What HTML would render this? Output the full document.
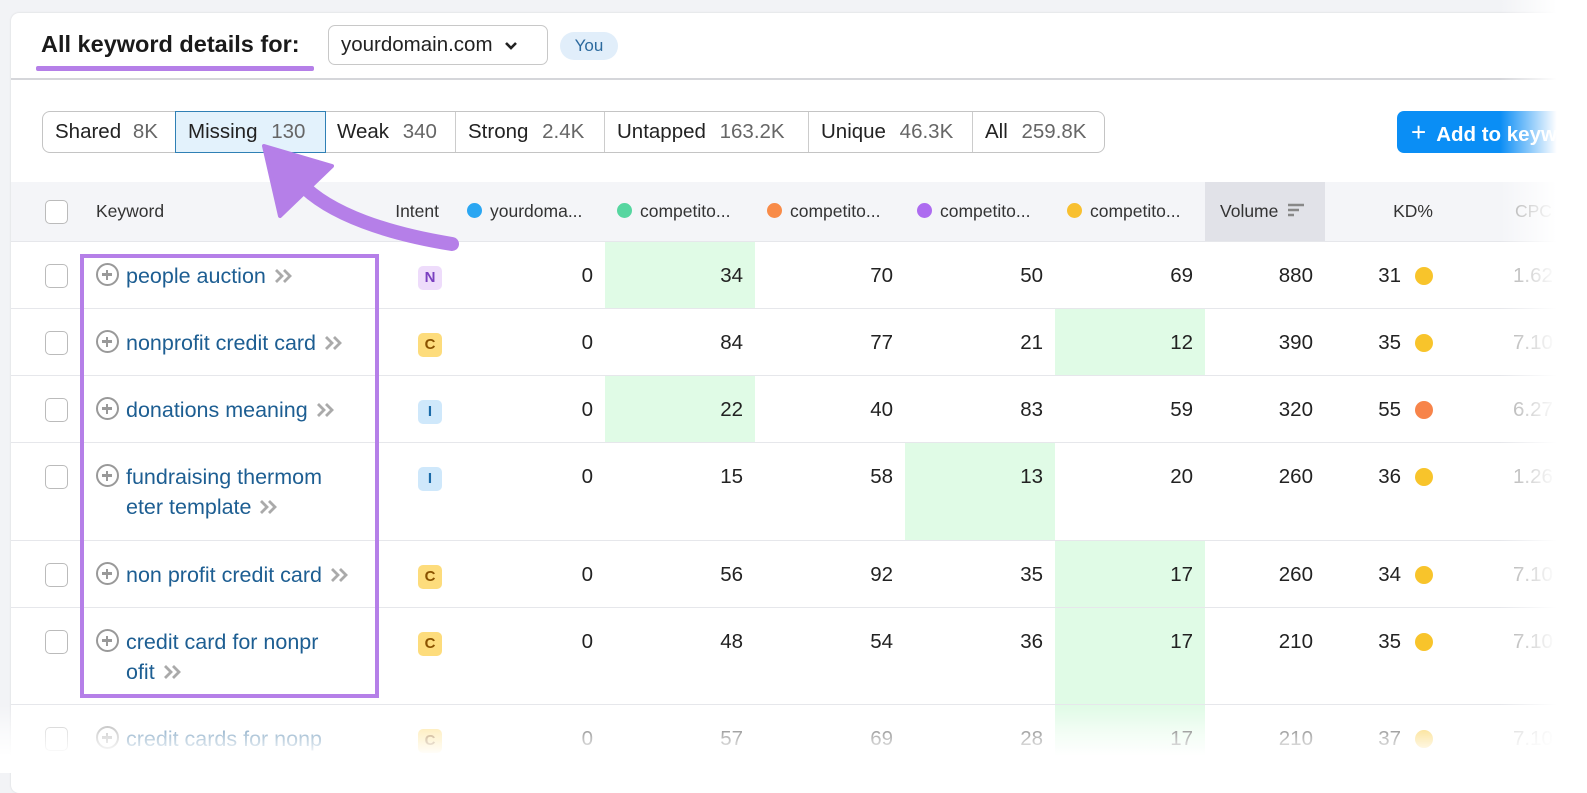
<!DOCTYPE html>
<html><head><meta charset="utf-8"><style>
*{margin:0;padding:0;box-sizing:border-box}
body{width:1587px;height:773px;overflow:hidden;background:#f2f3f6;font-family:"Liberation Sans",sans-serif;position:relative}
.card{position:absolute;left:11px;top:13px;width:1600px;height:780px;background:#fff;border-radius:8px;box-shadow:0 0 2px rgba(0,0,0,.12)}
.a{position:absolute}
table{position:absolute;left:11px;top:182px;border-collapse:collapse;table-layout:fixed;width:1600px;font-size:20.5px;color:#222}
td{vertical-align:top;padding-top:19px;line-height:30px;border-top:1px solid #e6e7eb;white-space:nowrap;overflow:hidden}
tr.h td{background:#f4f5f8;height:59px;padding-top:0;line-height:59px;font-size:17.5px;color:#333;border-top:none}
.n{text-align:right;padding-right:12px}
.g{background:#e0fbe6}
.cb{width:23px;height:24px;border:1.5px solid #bbb;border-radius:5px;margin:3px 0 0 34px;background:#fff}
.kw{color:#1d5e92;padding-left:16px;white-space:normal;line-height:30px;font-size:21.5px}
.kw span.p{display:inline-block;width:23px;height:23px;border:2.5px solid #999;border-radius:50%;vertical-align:-3px;margin-right:7px;position:relative}
.kw span.p:before{content:"";position:absolute;left:4px;top:8.3px;width:10px;height:2.5px;background:#999}
.kw span.p:after{content:"";position:absolute;left:7.8px;top:4.5px;width:2.5px;height:10px;background:#999}
.ch{display:inline-block;margin-left:8px;vertical-align:-1px}
.ib{display:inline-block;width:24px;height:24px;border-radius:5px;font-size:15px;font-weight:bold;text-align:center;line-height:24px;margin-left:38px}
.N{background:#eedcfb;color:#7a3fc0}.C{background:#fddc7c;color:#8a5200}.I{background:#cfe8fb;color:#1a6aa8}
.kd{display:flex;justify-content:flex-end;align-items:center;padding-right:12px}
.dot{display:inline-block;width:18px;height:18px;border-radius:50%;background:#f8c42b;margin-left:14px}
.cpc{color:#aaa;padding-left:68px}
.hd{display:inline-block;width:15px;height:15px;border-radius:50%;vertical-align:-1px;margin-right:8px}
</style></head><body>
<div class="card"></div>
<div class="a" style="left:41px;top:31px;font-size:23.5px;font-weight:bold;color:#1a1a1a">All keyword details for:</div>
<div class="a" style="left:36px;top:66px;width:278px;height:5px;background:#b57fe8;border-radius:2px"></div>
<div class="a" style="left:328px;top:25px;width:220px;height:40px;border:1px solid #c8c8c8;border-radius:7px;font-size:20.5px;line-height:38px;padding-left:12px;color:#222">yourdomain.com <svg width="14" height="10" style="margin-left:6px" viewBox="0 0 14 10"><path d="M2 2l5 5 5-5" stroke="#222" stroke-width="2.6" fill="none"/></svg></div>
<div class="a" style="left:560px;top:32px;width:58px;height:28px;border-radius:14px;background:#e1eefa;color:#2c6a9e;font-size:17px;line-height:28px;text-align:center">You</div>
<div class="a" style="left:11px;top:78px;width:1600px;height:2px;background:#d5d6da"></div>
<div class="a" style="left:42px;top:111px;height:42px;display:flex;border:1px solid #c4c4c4;border-radius:8px;font-size:20.5px;line-height:40px;color:#222">
<div style="width:133px;padding-left:12px">Shared <span style="color:#666;margin-left:6px">8K</span></div>
<div style="width:149px;padding-left:12px;background:#e3f2fc;outline:1.5px solid #2f80b5">Missing <span style="color:#666;margin-left:8px">130</span></div>
<div style="width:131px;padding-left:12px;border-right:1px solid #ccc">Weak <span style="color:#666;margin-left:8px">340</span></div>
<div style="width:149px;padding-left:12px;border-right:1px solid #ccc">Strong <span style="color:#666;margin-left:8px">2.4K</span></div>
<div style="width:204px;padding-left:12px;border-right:1px solid #ccc">Untapped <span style="color:#666;margin-left:8px">163.2K</span></div>
<div style="width:164px;padding-left:12px;border-right:1px solid #ccc">Unique <span style="color:#666;margin-left:8px">46.3K</span></div>
<div style="width:131px;padding-left:12px">All <span style="color:#666;margin-left:8px">259.8K</span></div>
</div>
<div class="a" style="left:1397px;top:111px;width:200px;height:42px;border-radius:7px;background:#0a8ef5;color:#fff;font-size:20.5px;font-weight:bold;line-height:42px;padding-left:14px"><span style="font-size:26px;font-weight:normal;margin-right:10px">+</span>Add to keyword</div>
<table>
<colgroup><col style="width:69px"><col style="width:300px"><col style="width:75px"><col style="width:150px"><col style="width:150px"><col style="width:150px"><col style="width:150px"><col style="width:150px"><col style="width:120px"><col style="width:120px"><col style="width:166px"></colgroup>
<tr class="h"><td><div class="cb" style="margin-top:0;vertical-align:middle;display:inline-block"></div></td><td style="padding-left:16px">Keyword</td><td style="text-align:right;padding-right:16px">Intent</td><td style="padding-left:12px"><span class="hd" style="background:#2aa6f2"></span>yourdoma...</td><td style="padding-left:12px"><span class="hd" style="background:#56d6a0"></span>competito...</td><td style="padding-left:12px"><span class="hd" style="background:#f88b48"></span>competito...</td><td style="padding-left:12px"><span class="hd" style="background:#ad6bf0"></span>competito...</td><td style="padding-left:12px"><span class="hd" style="background:#f8c030"></span>competito...</td><td style="background:#e1e2e8;padding-left:15px">Volume <svg width="18" height="14" viewBox="0 0 18 14" style="margin-left:4px"><path d="M1 2h16M1 7h11M1 12h6" stroke="#888" stroke-width="2.4"/></svg></td><td style="text-align:right;padding-right:12px">KD%</td><td class="cpc" style="padding-left:70px;color:#aaa">CPC</td></tr>
<tr style="height:67px"><td><div class="cb"></div></td><td class="kw"><span class="p"></span>people auction<svg class="ch" width="20" height="16" viewBox="0 0 20 16"><path d="M2 2l6 6-6 6M10 2l6 6-6 6" stroke="#aaa" stroke-width="2.8" fill="none"/></svg></td><td><span class="ib N">N</span></td><td class="n">0</td><td class="n g">34</td><td class="n">70</td><td class="n">50</td><td class="n">69</td><td class="n">880</td><td><div class="kd">31<span class="dot"></span></div></td><td class="cpc">1.62</td></tr>
<tr style="height:67px"><td><div class="cb"></div></td><td class="kw"><span class="p"></span>nonprofit credit card<svg class="ch" width="20" height="16" viewBox="0 0 20 16"><path d="M2 2l6 6-6 6M10 2l6 6-6 6" stroke="#aaa" stroke-width="2.8" fill="none"/></svg></td><td><span class="ib C">C</span></td><td class="n">0</td><td class="n">84</td><td class="n">77</td><td class="n">21</td><td class="n g">12</td><td class="n">390</td><td><div class="kd">35<span class="dot"></span></div></td><td class="cpc">7.10</td></tr>
<tr style="height:67px"><td><div class="cb"></div></td><td class="kw"><span class="p"></span>donations meaning<svg class="ch" width="20" height="16" viewBox="0 0 20 16"><path d="M2 2l6 6-6 6M10 2l6 6-6 6" stroke="#aaa" stroke-width="2.8" fill="none"/></svg></td><td><span class="ib I">I</span></td><td class="n">0</td><td class="n g">22</td><td class="n">40</td><td class="n">83</td><td class="n">59</td><td class="n">320</td><td><div class="kd">55<span class="dot" style="background:#f7844a"></span></div></td><td class="cpc">6.27</td></tr>
<tr style="height:98px"><td><div class="cb"></div></td><td class="kw"><span class="p"></span>fundraising thermom<br><span style="margin-left:30px">eter template</span><svg class="ch" width="20" height="16" viewBox="0 0 20 16"><path d="M2 2l6 6-6 6M10 2l6 6-6 6" stroke="#aaa" stroke-width="2.8" fill="none"/></svg></td><td><span class="ib I">I</span></td><td class="n">0</td><td class="n">15</td><td class="n">58</td><td class="n g">13</td><td class="n">20</td><td class="n">260</td><td><div class="kd">36<span class="dot"></span></div></td><td class="cpc">1.26</td></tr>
<tr style="height:67px"><td><div class="cb"></div></td><td class="kw"><span class="p"></span>non profit credit card<svg class="ch" width="20" height="16" viewBox="0 0 20 16"><path d="M2 2l6 6-6 6M10 2l6 6-6 6" stroke="#aaa" stroke-width="2.8" fill="none"/></svg></td><td><span class="ib C">C</span></td><td class="n">0</td><td class="n">56</td><td class="n">92</td><td class="n">35</td><td class="n g">17</td><td class="n">260</td><td><div class="kd">34<span class="dot"></span></div></td><td class="cpc">7.10</td></tr>
<tr style="height:97px"><td><div class="cb"></div></td><td class="kw"><span class="p"></span>credit card for nonpr<br><span style="margin-left:30px">ofit</span><svg class="ch" width="20" height="16" viewBox="0 0 20 16"><path d="M2 2l6 6-6 6M10 2l6 6-6 6" stroke="#aaa" stroke-width="2.8" fill="none"/></svg></td><td><span class="ib C">C</span></td><td class="n">0</td><td class="n">48</td><td class="n">54</td><td class="n">36</td><td class="n g">17</td><td class="n">210</td><td><div class="kd">35<span class="dot"></span></div></td><td class="cpc">7.10</td></tr>
<tr style="height:67px"><td><div class="cb"></div></td><td class="kw"><span class="p"></span>credit cards for nonp</td><td><span class="ib C">C</span></td><td class="n">0</td><td class="n">57</td><td class="n">69</td><td class="n">28</td><td class="n g">17</td><td class="n">210</td><td><div class="kd">37<span class="dot"></span></div></td><td class="cpc">7.10</td></tr>
</table>
<div class="a" style="left:80px;top:254px;width:299px;height:444px;border:4px solid #b57fe8"></div>
<svg class="a" style="left:0;top:0" width="1587" height="773">
<path d="M452 244 C390 234 330 215 300 183" stroke="#b57fe8" stroke-width="14" fill="none" stroke-linecap="round"/>
<path d="M264 146 L332 166 L280 216 Z" fill="#b57fe8" stroke="#b57fe8" stroke-width="4" stroke-linejoin="round"/>
</svg>
<div class="a" style="left:1500px;top:0;width:87px;height:773px;background:linear-gradient(90deg,rgba(255,255,255,0),#fff 65%)"></div>
<div class="a" style="left:0;top:705px;width:1587px;height:68px;background:linear-gradient(180deg,rgba(255,255,255,0),rgba(255,255,255,.6) 40%,#fff 75%)"></div>
</body></html>
